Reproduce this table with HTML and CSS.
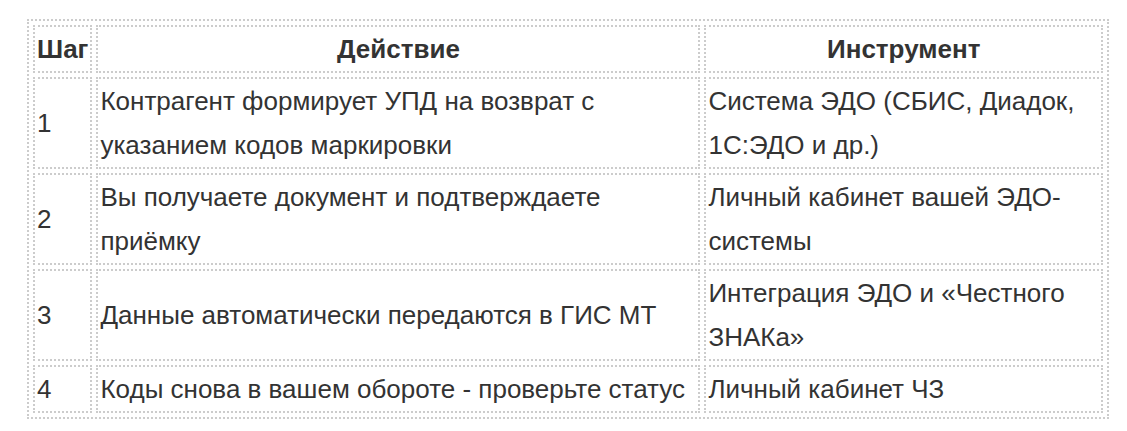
FILE: index.html
```html
<!DOCTYPE html>
<html lang="ru">
<head>
<meta charset="utf-8">
<link rel="stylesheet" href="styles.css">
</head>
<body>
<div class="wrap">
<table class="tbl">
<thead>
<tr><th class="c1">Шаг</th><th class="c2">Действие</th><th class="c3">Инструмент</th></tr>
</thead>
<tbody>
<tr><td>1</td><td>Контрагент формирует УПД на возврат с указанием кодов маркировки</td><td>Система ЭДО (СБИС, Диадок, 1С:ЭДО и др.)</td></tr>
<tr><td>2</td><td>Вы получаете документ и подтверждаете приёмку</td><td>Личный кабинет вашей ЭДО-системы</td></tr>
<tr><td>3</td><td>Данные автоматически передаются в ГИС МТ</td><td>Интеграция ЭДО и «Честного ЗНАКа»</td></tr>
<tr><td>4</td><td>Коды снова в вашем обороте - проверьте статус</td><td>Личный кабинет ЧЗ</td></tr>
</tbody>
</table>
</div>
</body>
</html>
```
FILE: styles.css
```css
html, body { margin: 0; padding: 0; background: #fff; }
.wrap { padding: 19px 18px 0 27px; }
.tbl {
  width: 100%;
  border: 2px dotted #ccc;
  border-spacing: 4px;
  font-family: "Liberation Sans", Arial, sans-serif;
  font-size: 26px;
  color: #333;
}
.tbl th, .tbl td {
  border: 2px dotted #ccc;
  padding: 0 2px;
  line-height: 44px;
  text-align: left;
  vertical-align: middle;
}
.tbl th { font-weight: bold; text-align: center; }
.tbl th.c1 { text-align: left; }
.tbl th.c2 { width: 596px; }
```
